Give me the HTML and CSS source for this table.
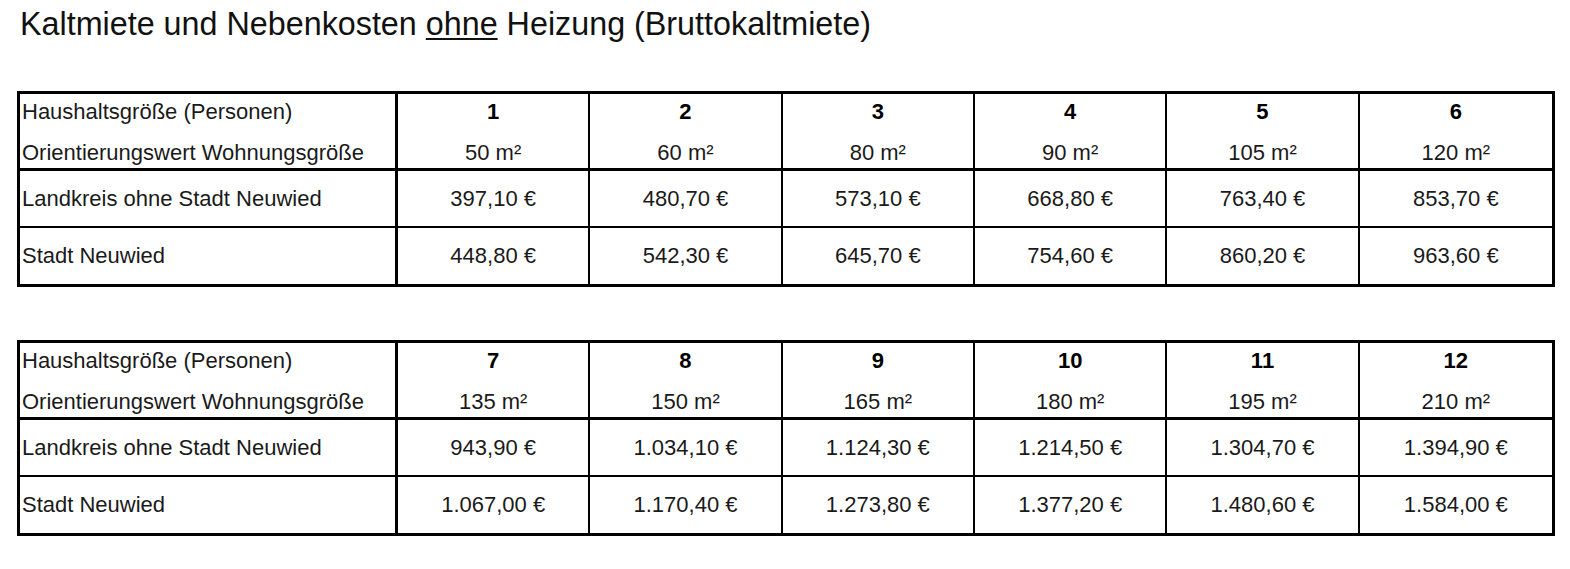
FILE: index.html
```html
<!DOCTYPE html>
<html lang="de">
<head>
<meta charset="utf-8">
<title>Bruttokaltmiete</title>
<link rel="stylesheet" href="styles.css">
</head>
<body>
<div class="page">
  <h1 class="title">Kaltmiete und Nebenkosten <u>ohne</u> Heizung (Bruttokaltmiete)</h1>

  <div class="tbl">
    <div class="cell hd label"><span>Haushaltsgröße (Personen)</span><span>Orientierungswert Wohnungsgröße</span></div>
    <div class="cell hd"><b>1</b><span>50 m²</span></div>
    <div class="cell hd"><b>2</b><span>60 m²</span></div>
    <div class="cell hd"><b>3</b><span>80 m²</span></div>
    <div class="cell hd"><b>4</b><span>90 m²</span></div>
    <div class="cell hd"><b>5</b><span>105 m²</span></div>
    <div class="cell hd last"><b>6</b><span>120 m²</span></div>

    <div class="cell r1 label">Landkreis ohne Stadt Neuwied</div>
    <div class="cell r1">397,10 €</div>
    <div class="cell r1">480,70 €</div>
    <div class="cell r1">573,10 €</div>
    <div class="cell r1">668,80 €</div>
    <div class="cell r1">763,40 €</div>
    <div class="cell r1 last">853,70 €</div>

    <div class="cell r2 label">Stadt Neuwied</div>
    <div class="cell r2">448,80 €</div>
    <div class="cell r2">542,30 €</div>
    <div class="cell r2">645,70 €</div>
    <div class="cell r2">754,60 €</div>
    <div class="cell r2">860,20 €</div>
    <div class="cell r2 last">963,60 €</div>
  </div>

  <div class="tbl second">
    <div class="cell hd label"><span>Haushaltsgröße (Personen)</span><span>Orientierungswert Wohnungsgröße</span></div>
    <div class="cell hd"><b>7</b><span>135 m²</span></div>
    <div class="cell hd"><b>8</b><span>150 m²</span></div>
    <div class="cell hd"><b>9</b><span>165 m²</span></div>
    <div class="cell hd"><b>10</b><span>180 m²</span></div>
    <div class="cell hd"><b>11</b><span>195 m²</span></div>
    <div class="cell hd last"><b>12</b><span>210 m²</span></div>

    <div class="cell r1 label">Landkreis ohne Stadt Neuwied</div>
    <div class="cell r1">943,90 €</div>
    <div class="cell r1">1.034,10 €</div>
    <div class="cell r1">1.124,30 €</div>
    <div class="cell r1">1.214,50 €</div>
    <div class="cell r1">1.304,70 €</div>
    <div class="cell r1 last">1.394,90 €</div>

    <div class="cell r2 label">Stadt Neuwied</div>
    <div class="cell r2">1.067,00 €</div>
    <div class="cell r2">1.170,40 €</div>
    <div class="cell r2">1.273,80 €</div>
    <div class="cell r2">1.377,20 €</div>
    <div class="cell r2">1.480,60 €</div>
    <div class="cell r2 last">1.584,00 €</div>
  </div>
</div>
</body>
</html>
```

FILE: styles.css
```css
html, body {
  margin: 0;
  padding: 0;
  background: #ffffff;
}

body {
  font-family: "Liberation Sans", Arial, sans-serif;
  color: #000000;
}

.page {
  padding: 6px 0 0 17px;
}

.title {
  margin: 0 0 48px 3px;
  font-size: 32.3px;
  font-weight: normal;
  line-height: 37px;
  color: #111111;
}

.title u {
  text-decoration-thickness: 2px;
  text-underline-offset: 3px;
}

.tbl {
  box-sizing: border-box;
  width: 1538px;
  display: grid;
  grid-template-columns: 378px repeat(6, 1fr);
  border: 3px solid #000000;
  font-size: 22px;
  color: #1a1a1a;
}

.tbl.second {
  margin-top: 53px;
}

.cell {
  box-sizing: border-box;
  border-right: 2px solid #000000;
  display: flex;
  align-items: center;
  justify-content: center;
  white-space: nowrap;
}

.cell.label {
  justify-content: flex-start;
  padding-left: 2px;
  border-right-width: 3px;
}

.cell.last {
  border-right: none;
}

.hd {
  height: 77px;
  border-bottom: 3px solid #000000;
  flex-direction: column;
  padding-top: 2px;
  line-height: 41px;
  align-items: center;
  justify-content: center;
}

.cell.hd.label {
  justify-content: center;
  align-items: flex-start;
}

.hd b {
  font-weight: bold;
  color: #000000;
}

.r1 {
  height: 57px;
  border-bottom: 2px solid #000000;
}

.r2 {
  height: 56px;
}
```
